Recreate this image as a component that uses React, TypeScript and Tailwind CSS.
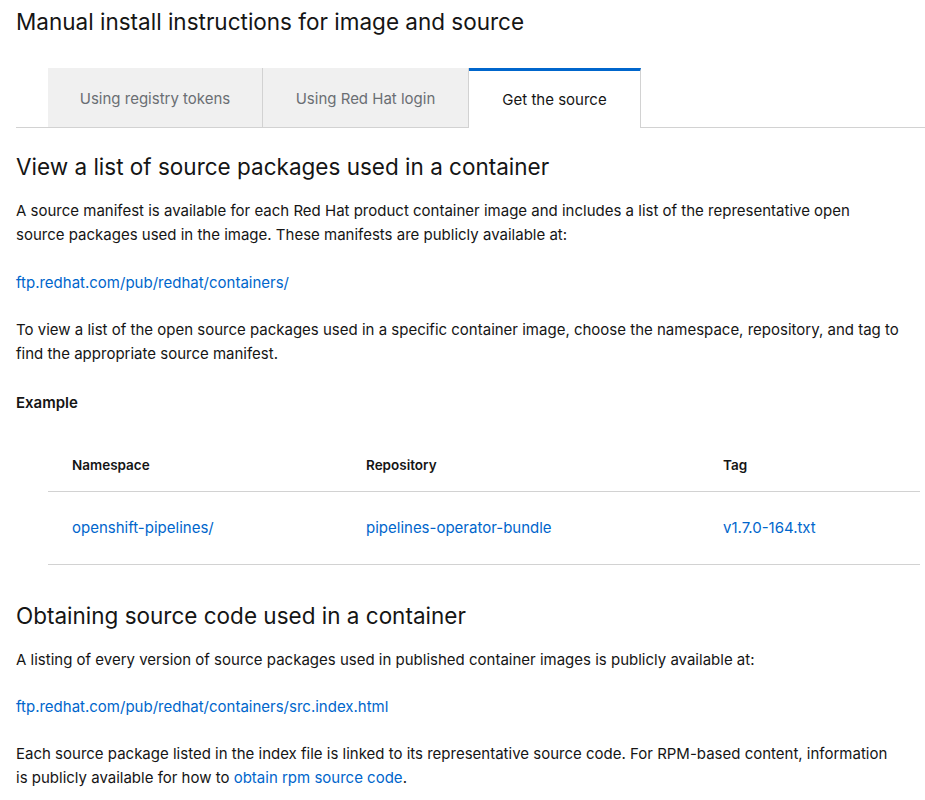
const body = { fontFamily: 'Inter, "Open Sans", sans-serif' };

function Tab({ label, active }: { label: string; active?: boolean }) {
  if (active) {
    return (
      <div className="flex h-[60px] w-[172px] items-center justify-center border-t-[3px] border-r border-t-[#0066cc] border-r-[#d2d2d2] bg-white -mb-px pt-[2px] text-[15px] text-[#151515]">
        {label}
      </div>
    );
  }
  return (
    <div className="flex h-[59px] items-center justify-center border-r border-[#d2d2d2] bg-[#f0f0f0] pt-[3px] text-[15px] text-[#6a6e73]">
      {label}
    </div>
  );
}

export default function App() {
  return (
    <div className="min-h-screen bg-white pl-4 text-[#151515]" style={body}>
      <h1 className="pt-[6px] text-[22.5px] leading-[32px] font-normal">
        Manual install instructions for image and source
      </h1>

      <div className="mt-[30px] flex border-b border-[#d2d2d2] pl-8">
        <div className="w-[215px]"><Tab label="Using registry tokens" /></div>
        <div className="w-[206px]"><Tab label="Using Red Hat login" /></div>
        <Tab label="Get the source" active />
      </div>

      <h2 className="mt-[23px] text-[22.5px] leading-[32px] font-normal">
        View a list of source packages used in a container
      </h2>
      <p className="mt-4 text-[15px] leading-[24px]">
        A source manifest is available for each Red Hat product container image and includes a list of the representative open
        <br />
        source packages used in the image. These manifests are publicly available at:
      </p>
      <a className="mt-6 block text-[15px] leading-[24px] text-[#0066cc]" href="#">
        ftp.redhat.com/pub/redhat/containers/
      </a>
      <p className="mt-[23px] text-[15px] leading-[24px]">
        To view a list of the open source packages used in a specific container image, choose the namespace, repository, and tag to
        <br />
        find the appropriate source manifest.
      </p>
      <p className="mt-[25px] text-[15px] leading-[24px] font-semibold">Example</p>

      <div className="mt-6 mr-[5px] ml-8">
        <div className="grid h-[53px] grid-cols-[294px_357px_1fr] items-center border-b border-[#d2d2d2] pl-6 text-[13.5px] font-semibold">
          <div>Namespace</div>
          <div>Repository</div>
          <div>Tag</div>
        </div>
        <div className="grid h-[73px] grid-cols-[294px_357px_1fr] items-center border-b border-[#d2d2d2] pl-6 text-[15px] text-[#0066cc]">
          <a href="#">openshift-pipelines/</a>
          <a href="#">pipelines-operator-bundle</a>
          <a href="#">v1.7.0-164.txt</a>
        </div>
      </div>

      <h2 className="mt-[35px] text-[22.5px] leading-[32px] font-normal">
        Obtaining source code used in a container
      </h2>
      <p className="mt-4 text-[15px] leading-[24px]">
        A listing of every version of source packages used in published container images is publicly available at:
      </p>
      <a className="mt-[23px] block text-[15px] leading-[24px] text-[#0066cc]" href="#">
        ftp.redhat.com/pub/redhat/containers/src.index.html
      </a>
      <p className="mt-[23px] text-[15px] leading-[24px]">
        Each source package listed in the index file is linked to its representative source code. For RPM-based content, information
        <br />
        is publicly available for how to{' '}
        <a className="text-[#0066cc]" href="#">obtain rpm source code</a>.
      </p>
    </div>
  );
}
